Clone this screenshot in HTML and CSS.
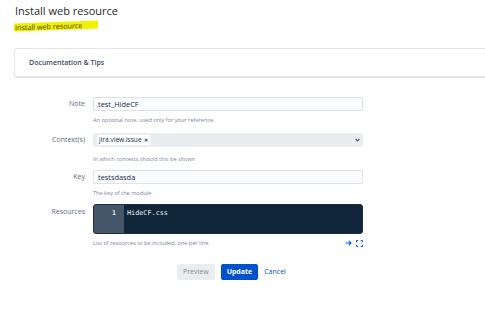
FILE: index.html
```html
<!DOCTYPE html>
<html lang="en">
<head>
<meta charset="utf-8">
<title>Install web resource</title>
<link rel="stylesheet" href="styles.css">
</head>
<body>
<div class="page">
  <h1 class="title">Install web resource</h1>
  <div class="subtitle"><span class="marker">Install web resource</span></div>
  <div class="doc-box">Documentation &amp; Tips</div>

  <form class="form">
    <div class="row row-note">
      <label class="label">Note</label>
      <div class="field">
        <div class="input">test_HideCF</div>
        <div class="help">An optional note, used only for your reference.</div>
      </div>
    </div>
    <div class="row row-context">
      <label class="label">Context(s)</label>
      <div class="field">
        <div class="select">
          <span class="tag">jira.view.issue <span class="tag-x">&#x2715;</span></span>
          <svg class="chevron" width="5" height="4" viewBox="0 0 5 4"><path d="M0.6 0.8 L2.5 2.8 L4.4 0.8" fill="none" stroke="#42526e" stroke-width="1.2"/></svg>
        </div>
        <div class="help help-far">In which contexts should this be shown</div>
      </div>
    </div>
    <div class="row row-key">
      <label class="label">Key</label>
      <div class="field">
        <div class="input">testsdasda</div>
        <div class="help">The key of the module</div>
      </div>
    </div>
    <div class="row row-res">
      <label class="label label-res">Resources</label>
      <div class="field">
        <div class="editor">
          <div class="gutter">1</div>
          <div class="code">HideCF.css</div>
        </div>
        <div class="help help-icons">
          <span>List of resources to be included, one per line</span>
          <span class="icons">
            <svg width="7" height="6" viewBox="0 0 7 6"><path d="M0.5 3 H6 M3.8 0.8 L6 3 L3.8 5.2" fill="none" stroke="#0065ff" stroke-width="1.2"/></svg>
            <svg width="7" height="7" viewBox="0 0 7 7"><path d="M0.5 2.3 V0.5 H2.3 M4.7 0.5 H6.5 V2.3 M6.5 4.7 V6.5 H4.7 M2.3 6.5 H0.5 V4.7" fill="none" stroke="#0065ff" stroke-width="1"/></svg>
          </span>
        </div>
      </div>
    </div>
    <div class="row row-buttons">
      <div class="label"></div>
      <div class="field buttons">
        <span class="btn btn-preview">Preview</span>
        <span class="btn btn-update">Update</span>
        <span class="link">Cancel</span>
      </div>
    </div>
  </form>
</div>
</body>
</html>
```

FILE: styles.css
```css
html, body {
  margin: 0;
  padding: 0;
  background: #ffffff;
}
body {
  font-family: "Open Sans", "Noto Sans", sans-serif;
  color: #172b4d;
}
.page {
  padding: 4px 0 0 14px;
}
.title {
  margin: 0 0 0 1px;
  font-size: 11px;
  line-height: 14px;
  font-weight: 400;
  color: #2a2a2a;
}
.subtitle {
  margin-top: 4px;
  height: 9px;
  display: flex;
  align-items: flex-start;
}
.marker {
  display: block;
  background: #f2f200;
  color: #3b3b00;
  font-size: 7.2px;
  line-height: 8px;
  padding: 0 16px 0 1px;
  transform: skewY(-2deg);
}
.doc-box {
  margin-top: 17px;
  height: 27px;
  border: 1px solid #e4e6ea;
  border-right: none;
  border-radius: 3px 0 0 3px;
  box-shadow: 0 1px 1px rgba(9, 30, 66, 0.12);
  box-sizing: content-box;
  padding-left: 14px;
  font-size: 7px;
  font-weight: 600;
  line-height: 27px;
  color: #3d4a63;
}
.form {
  margin-top: 20px;
}
.row {
  display: grid;
  grid-template-columns: 71px 270px;
  column-gap: 8px;
}
.row-context { margin-top: 8px; }
.row-key { margin-top: 6px; }
.row-res { margin-top: 6px; }
.row-buttons { margin-top: 16px; }
.label {
  text-align: right;
  font-size: 7px;
  line-height: 14px;
  color: #5e6c84;
}
.label-res {
  line-height: 16px;
}
.input {
  box-sizing: border-box;
  height: 14px;
  border: 1px solid #dfe1e6;
  border-radius: 2px;
  background: #fafbfc;
  padding-left: 4px;
  font-size: 7.4px;
  line-height: 12px;
  color: #172b4d;
}
.select {
  box-sizing: border-box;
  height: 14px;
  border-radius: 2px;
  background: #ebecf0;
  display: flex;
  align-items: center;
  justify-content: space-between;
  padding: 0 3px 0 4px;
}
.tag {
  background: #ffffff;
  border-radius: 2px;
  font-size: 6.6px;
  line-height: 10px;
  padding: 0 3px 0 2px;
  color: #172b4d;
}
.tag-x {
  font-size: 4.5px;
  font-weight: 700;
  margin-left: 1px;
}
.chevron {
  display: block;
}
.help {
  margin-top: 4px;
  font-size: 5.6px;
  line-height: 10px;
  color: #7a869a;
}
.help-far {
  margin-top: 7px;
}
.help-icons {
  display: flex;
  justify-content: space-between;
  align-items: center;
}
.icons {
  display: flex;
  gap: 4px;
  align-items: center;
}
.icons svg {
  display: block;
}
.editor {
  box-sizing: border-box;
  height: 30px;
  display: flex;
  border: 1px solid #1e2f40;
  border-radius: 3px;
  background: #10253a;
  overflow: hidden;
}
.gutter {
  width: 30px;
  background: #45566a;
  color: #e8ecf0;
  font-family: "DejaVu Sans Mono", "Liberation Mono", monospace;
  font-size: 6.5px;
  font-weight: 700;
  text-align: right;
  padding: 3px 8px 0 0;
  box-sizing: border-box;
  line-height: 10px;
}
.code {
  padding: 3px 0 0 3px;
  font-family: "DejaVu Sans Mono", "Liberation Mono", monospace;
  font-size: 6.8px;
  line-height: 10px;
  color: #eef2f5;
}
.buttons {
  display: flex;
  align-items: center;
  gap: 6px;
  padding-left: 84px;
}
.btn {
  box-sizing: border-box;
  height: 16px;
  border-radius: 2px;
  font-size: 7px;
  line-height: 16px;
  padding: 0 6px;
}
.btn-preview {
  background: #ebecf0;
  color: #7f8a9c;
}
.btn-update {
  background: #0052cc;
  color: #ffffff;
  font-weight: 700;
}
.link {
  font-size: 7px;
  line-height: 16px;
  color: #0052cc;
}
```
